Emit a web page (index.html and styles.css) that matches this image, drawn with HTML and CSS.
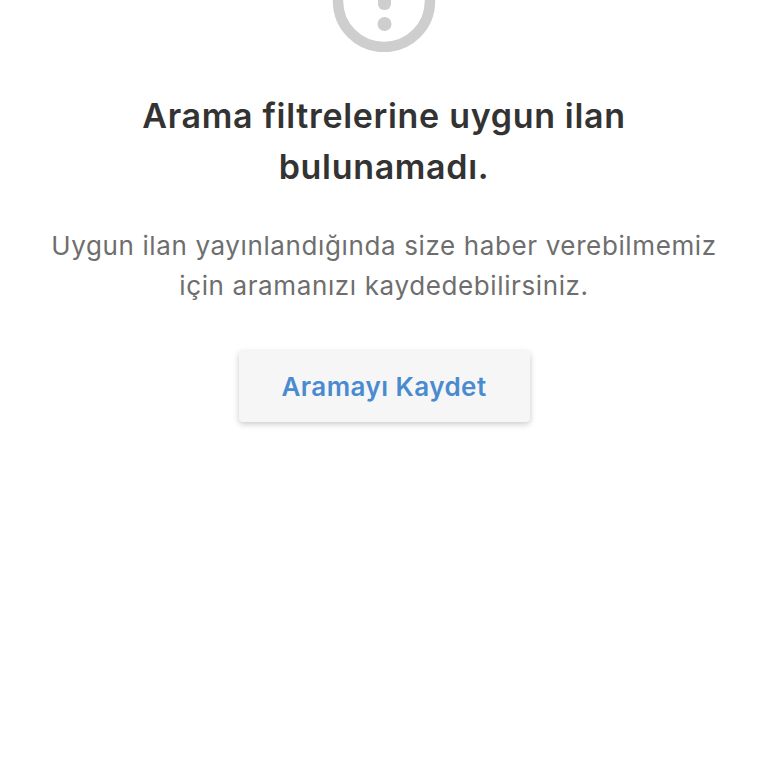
FILE: index.html
```html
<!DOCTYPE html>
<html lang="tr">
<head>
<meta charset="utf-8">
<title>Arama</title>
<link rel="stylesheet" href="styles.css">
</head>
<body>
<main class="empty">
  <div class="icon-clip">
    <svg class="icon" width="104" height="104" viewBox="0 0 104 104" aria-hidden="true">
      <circle cx="52" cy="52" r="46" fill="none" stroke="#cecece" stroke-width="10.5"/>
      <rect x="46" y="22" width="13" height="39" rx="6" fill="#cecece"/>
      <circle cx="52.5" cy="75" r="7" fill="#cecece"/>
    </svg>
  </div>
  <h1 class="title">Arama filtrelerine uygun ilan bulunamadı.</h1>
  <p class="desc">Uygun ilan yayınlandığında size haber verebilmemiz için aramanızı kaydedebilirsiniz.</p>
  <button class="save">Aramayı Kaydet</button>
</main>
</body>
</html>
```
FILE: styles.css
```css
html, body { margin: 0; padding: 0; background: #fff; }
body { height: 768px; overflow: hidden; font-family: Inter, "Noto Sans", sans-serif; }
.empty { display: flex; flex-direction: column; align-items: center; text-align: center; padding: 0 40px; }
.icon-clip { height: 52px; width: 104px; overflow: hidden; }
.icon { display: block; margin-top: -51px; }
.title { width: 540px; margin: 38px 0 0; font-size: 34px; line-height: 51px; font-weight: 600; color: #333; letter-spacing: 0.68px; }
.desc { width: 680px; margin: 34px 0 0; font-size: 26px; line-height: 40px; font-weight: 400; color: #6e6e6e; letter-spacing: 0.62px; }
.save { margin-top: 45px; width: 291px; height: 71px; border: 0; border-radius: 4px; background: #f6f6f7; color: #4a8bd0; font-family: inherit; font-size: 26px; font-weight: 600; letter-spacing: 0.45px; box-shadow: 0 2px 6px rgba(0,0,0,.22); }
```
